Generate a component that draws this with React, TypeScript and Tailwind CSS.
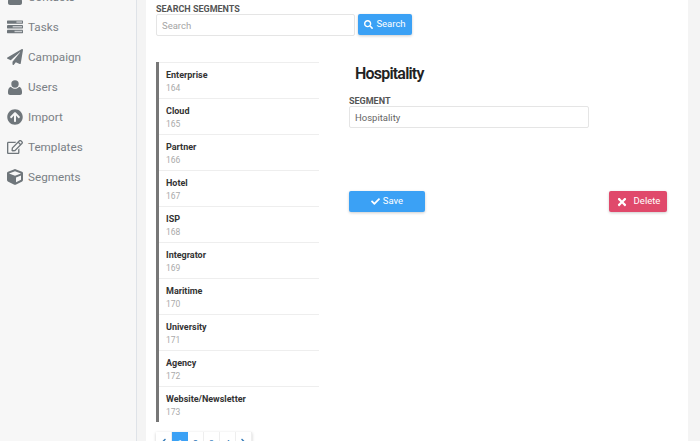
import { FaPaperPlane, FaArrowCircleUp, FaRegEdit, FaCube, FaSearch, FaCheck, FaTimes, FaChevronLeft, FaChevronRight } from "react-icons/fa";

function UserIcon() {
  return (
    <svg viewBox="0 0 14 15" className="w-[14px] h-[15px]" fill="currentColor">
      <circle cx="7" cy="4" r="3.7" />
      <path d="M3 6.8C4 8.2 5.4 8.8 7 8.8s3-.6 4-2c1.7.4 3 2 3 4.7V13c0 1.2-.9 2-2 2H2c-1.100 0-2-.8-2-2v-1.500C0 8.800 1.300 7.200 3 6.800z" />
    </svg>
  );
}

function TasksIcon() {
  return (
    <svg viewBox="0 0 17 14" className="w-[17px] h-[14px]" fill="currentColor">
      <rect x="0" y="0" width="17" height="3.600" rx="0.500" />
      <rect x="0" y="5" width="17" height="3.600" rx="0.500" />
      <rect x="0" y="10" width="17" height="3.600" rx="0.500" />
      <rect x="10" y="1" width="6" height="1.500" fill="#c9cccf" />
      <rect x="6" y="6" width="10" height="1.500" fill="#c9cccf" />
      <rect x="8" y="11" width="8" height="1.500" fill="#c9cccf" />
    </svg>
  );
}

const nav = [
  { label: "Contacts", icon: <UserIcon /> },
  { label: "Tasks", icon: <TasksIcon /> },
  { label: "Campaign", icon: <FaPaperPlane /> },
  { label: "Users", icon: <UserIcon /> },
  { label: "Import", icon: <FaArrowCircleUp /> },
  { label: "Templates", icon: <FaRegEdit /> },
  { label: "Segments", icon: <FaCube /> },
];

const segments = [
  ["Enterprise", "164"],
  ["Cloud", "165"],
  ["Partner", "166"],
  ["Hotel", "167"],
  ["ISP", "168"],
  ["Integrator", "169"],
  ["Maritime", "170"],
  ["University", "171"],
  ["Agency", "172"],
  ["Website/Newsletter", "173"],
];

const pageCell = "w-[16px] flex justify-center pt-[6px] border-r border-[#eee] text-[#337ab7]";

export default function App() {
  return (
    <div className="h-[441px] w-[700px] overflow-hidden flex bg-[#f4f4f4] font-['Roboto',sans-serif]">
      <aside className="w-[137px] shrink-0 h-full bg-[#f7f7f7] border-r border-[#dfe3e8]">
        <ul className="-mt-[18px] flex flex-col">
          {nav.map(({ label, icon }) => (
            <li key={label} className="h-[30px] flex items-center pl-[7px] text-[#6f767b]">
              <span className="w-[16px] h-[17px] flex items-center justify-center text-[16px] mr-[5px]">
                {icon}
              </span>
              <span className="text-[11.7px] text-[#7a8085] pt-[1px]">{label}</span>
            </li>
          ))}
        </ul>
      </aside>
      <div className="w-[9px] shrink-0" />
      <main className="w-[542px] h-full bg-white shrink-0 overflow-hidden pl-[10px]">
        <label className="block text-[9px] font-bold text-[#555] leading-[12px] mt-[2px] pt-[1px] h-[12px]">SEARCH SEGMENTS</label>
        <div className="flex items-start gap-[3px]">
          <input
            placeholder="Search"
            className="w-[199px] h-[22px] border border-[#e5e5e5] rounded-[2px] px-[5px] text-[9.5px] placeholder:text-[#a5a5a5] outline-none"
          />
          <button className="w-[54px] h-[21px] bg-[#3ba1f5] text-white rounded-[2px] text-[9.5px] flex items-center justify-center gap-[3px] shadow-[0_1px_3px_rgba(0,0,0,0.2)]">
            <FaSearch className="text-[9px]" />
            Search
          </button>
        </div>
        <div className="flex mt-[26px]">
          <div className="shrink-0">
            <ul className="w-[163px] border-l-[3px] border-[#777]">
              {segments.map(([name, id]) => (
                <li key={id} className="h-[36px] border-t border-[#eee] pl-[7px] pt-[6px]">
                  <div className="text-[9px] font-bold text-[#333] leading-[13px]">{name}</div>
                  <div className="text-[8.5px] text-[#aaa] leading-[13px]">{id}</div>
                </li>
              ))}
            </ul>
            <div className="flex mt-[10px] h-[24px] w-[96px] shadow-[0_1px_3px_rgba(0,0,0,0.2)] text-[9px]">
              <span className={pageCell}><FaChevronLeft className="text-[9px]" /></span>
              <span className="w-[16px] flex justify-center pt-[6px] bg-[#3ba1f5] text-white">1</span>
              <span className={pageCell}>2</span>
              <span className={pageCell}>3</span>
              <span className={pageCell}>4</span>
              <span className={pageCell}><FaChevronRight className="text-[9px]" /></span>
            </div>
          </div>
          <div className="ml-[30px] flex-1 pr-[21px]">
            <h2 className="ml-[6px] text-[16px] font-semibold text-[#222] leading-[18px] mt-[3px] tracking-[-0.8px]">Hospitality</h2>
            <label className="block text-[9px] font-bold text-[#555] leading-[12px] mt-[11px] pt-[1px] h-[12px]">SEGMENT</label>
            <input
              readOnly
              value="Hospitality"
              className="block w-[240px] h-[22px] border border-[#e5e5e5] rounded-[2px] px-[5px] text-[9.5px] text-[#666] outline-none"
            />
            <div className="flex justify-between mt-[63px]">
              <button className="w-[76px] h-[21px] bg-[#3ba1f5] text-white rounded-[2px] text-[9.5px] flex items-center justify-center gap-[3px] shadow-[0_1px_3px_rgba(0,0,0,0.2)]">
                <FaCheck className="text-[9px]" />
                Save
              </button>
              <button className="w-[58px] h-[21px] bg-[#e0496b] text-white rounded-[2px] text-[9.5px] flex items-center justify-center gap-[6px] shadow-[0_1px_3px_rgba(0,0,0,0.2)]">
                <FaTimes className="text-[12px]" />
                Delete
              </button>
            </div>
          </div>
        </div>
      </main>
    </div>
  );
}
